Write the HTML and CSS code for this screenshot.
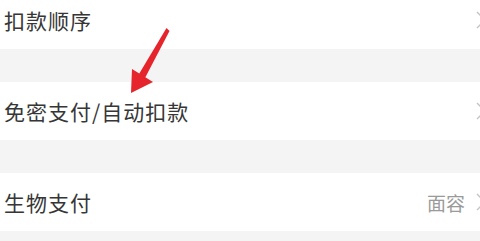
FILE: index.html
```html
<!DOCTYPE html>
<html lang="zh">
<head>
<meta charset="utf-8">
<link rel="stylesheet" href="styles.css">
</head>
<body>
<div class="list">
  <div class="row row-first">
    <span class="label">扣款顺序</span>
    <span class="right"><svg class="chev" viewBox="0 0 10 18" width="10" height="18"><path d="M1 1 L9 9 L1 17" fill="none" stroke="#c4c4c4" stroke-width="1.4"/></svg></span>
  </div>
  <div class="gap"></div>
  <div class="row">
    <span class="label">免密支付/自动扣款</span>
    <span class="right"><svg class="chev" viewBox="0 0 10 18" width="10" height="18"><path d="M1 1 L9 9 L1 17" fill="none" stroke="#c4c4c4" stroke-width="1.4"/></svg></span>
  </div>
  <div class="gap"></div>
  <div class="row">
    <span class="label">生物支付</span>
    <span class="right"><span class="value">面容</span><svg class="chev" viewBox="0 0 10 18" width="10" height="18"><path d="M1 1 L9 9 L1 17" fill="none" stroke="#c4c4c4" stroke-width="1.4"/></svg></span>
  </div>
  <div class="gap gap-last"></div>
</div>
<svg class="arrow" viewBox="0 0 480 241" width="480" height="241">
  <polygon points="166.5,28 169.5,31 145,78 139,74" fill="#e5242b"/>
  <polygon points="131,93 132,69 153,82" fill="#e5242b"/>
</svg>
</body>
</html>
```
FILE: styles.css
```css
html, body {
  margin: 0;
  padding: 0;
  width: 480px;
  height: 241px;
  overflow: hidden;
  background: #ffffff;
}
body {
  position: relative;
  font-family: "Noto Sans CJK SC", "Noto Sans", sans-serif;
}
.list {
  display: flex;
  flex-direction: column;
  margin-top: -9px;
}
.row {
  height: 58px;
  display: flex;
  align-items: center;
  justify-content: space-between;
  padding-left: 4px;
  background: #ffffff;
}
.label {
  font-size: 21px;
  letter-spacing: 1px;
  color: #363636;
  line-height: 1;
}
.right {
  display: flex;
  align-items: center;
  gap: 11px;
  margin-right: -6px;
}
.value {
  font-size: 19px;
  color: #9a9a9a;
  line-height: 1;
}
.chev {
  display: block;
}
.gap {
  height: 33px;
  background: #f4f4f4;
}
.gap-last {
  height: 10px;
}
.arrow {
  position: absolute;
  left: 0;
  top: 0;
  pointer-events: none;
}
```
